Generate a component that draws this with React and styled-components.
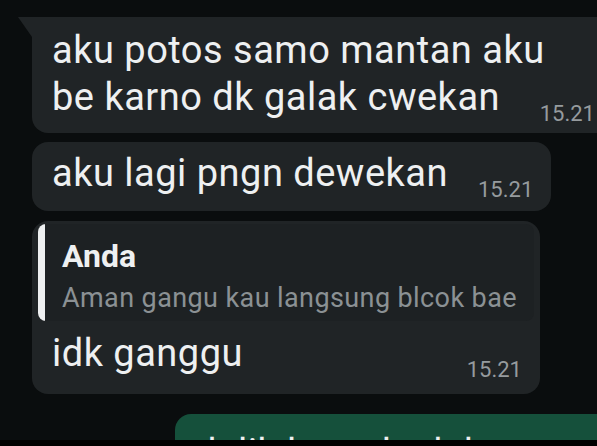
import styled, { createGlobalStyle } from 'styled-components'

const Global = createGlobalStyle`
  html, body {
    margin: 0;
    padding: 0;
    background: #000;
    overflow: hidden;
  }
  body {
    font-family: Roboto, "Liberation Sans", sans-serif;
  }
`

const Screen = styled.div`
  width: 597px;
  height: 440px;
  overflow: hidden;
  background: #0a0d0e;
  display: flex;
  flex-direction: column;
  align-items: flex-start;
  padding: 17px 0 0 32px;
  box-sizing: border-box;
`

const Footer = styled.div`
  height: 6px;
  background: #000;
`

const Bubble = styled.div`
  position: relative;
  flex-shrink: 0;
  display: flex;
  align-items: flex-end;
  background: #202426;
  border-radius: ${p => (p.$tail ? '0 16px 16px 16px' : '16px')};
  padding: ${p => (p.$tail ? 10 : 8)}px 18px ${p => (p.$tail ? 8 : 10)}px 20px;
  margin-top: ${p => p.$mt || 0}px;

  &::before {
    content: ${p => (p.$tail ? "''" : 'none')};
    position: absolute;
    top: 0;
    left: -14px;
    width: 0;
    height: 0;
    border-top: 20px solid #202426;
    border-left: 14px solid transparent;
  }
`

const Text = styled.div`
  font-size: 38px;
  line-height: 47px;
  letter-spacing: 0.5px;
  color: #eef0f1;
  white-space: nowrap;
  padding-bottom: 4px;
`

const Time = styled.span`
  font-size: 22px;
  line-height: 22px;
  color: #969b9e;
  white-space: nowrap;
  margin-left: ${p => p.$gap || 0}px;
`

const QuoteBubble = styled.div`
  flex-shrink: 0;
  display: flex;
  flex-direction: column;
  background: #202426;
  border-radius: 16px;
  padding: 3px 6px 9px 6px;
  margin-top: 10px;
`

const Quote = styled.div`
  display: flex;
  background: #1d2123;
  border-radius: 8px;
  overflow: hidden;
`

const Bar = styled.div`
  width: 7px;
  flex-shrink: 0;
  background: #eef0f1;
`

const QuoteBody = styled.div`
  padding: 13px 17px 6px 17px;
`

const Author = styled.div`
  font-size: 32px;
  line-height: 38px;
  font-weight: 700;
  color: #eef0f1;
  margin-bottom: 6px;
`

const QuoteText = styled.div`
  font-size: 27px;
  line-height: 34px;
  letter-spacing: 0.4px;
  color: #8b9194;
  white-space: nowrap;
`

const Body = styled.div`
  display: flex;
  align-items: flex-end;
  justify-content: space-between;
  padding: 9px 12px 4px 14px;
`

const OutBubble = styled.div`
  flex-shrink: 0;
  min-width: 460px;
  background: #15503b;
  border-radius: 16px 16px 0 0;
  padding: 16px 20px;
  margin: 20px 0 0 143px;
`

export default function App() {
  return (
    <>
      <Global />
      <Screen>
        <Bubble $tail>
          <Text>
            aku potos samo mantan aku
            <br />
            be karno dk galak cwekan
          </Text>
          <Time $gap={-5}>15.21</Time>
        </Bubble>

        <Bubble $mt={9}>
          <Text>aku lagi pngn dewekan</Text>
          <Time $gap={30}>15.21</Time>
        </Bubble>

        <QuoteBubble>
          <Quote>
            <Bar />
            <QuoteBody>
              <Author>Anda</Author>
              <QuoteText>Aman gangu kau langsung blcok bae</QuoteText>
            </QuoteBody>
          </Quote>
          <Body>
            <Text>idk ganggu</Text>
            <Time>15.21</Time>
          </Body>
        </QuoteBubble>

        <OutBubble>
          <Text>dalik bae aku lah</Text>
        </OutBubble>
      </Screen>
      <Footer />
    </>
  )
}
